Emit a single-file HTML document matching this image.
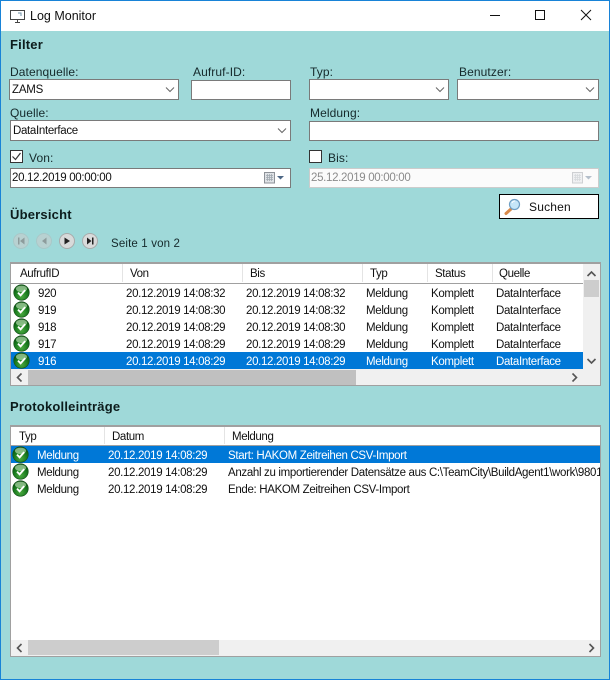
<!DOCTYPE html>
<html><head><meta charset="utf-8"><title>Log Monitor</title>
<style>
*{box-sizing:border-box}
html,body{margin:0;padding:0}
body{width:610px;height:680px;position:relative;overflow:hidden;background:#9fd9d9;font-family:"Liberation Sans",sans-serif;font-size:12px;color:#111}
.a{position:absolute}
.t{position:absolute;white-space:nowrap;line-height:14px;height:14px}
.h{font-weight:bold;font-size:13px;letter-spacing:.2px;color:#0c1c1c}
.l{font-size:12px;letter-spacing:.1px;color:#15292b}
.v{font-size:11.5px;letter-spacing:-.32px}
.f{position:absolute;background:#fff;border:1px solid #7a7a7a}
.chev{position:absolute;width:14px;height:8px}
.grid{position:absolute;background:#fff;border:1px solid #a0a0a0;border-top:2px solid #a0a0a0;overflow:hidden}
.hd{position:absolute;left:0;background:#fff;border-bottom:1px solid #a0a0a0}
.sep{position:absolute;top:0;width:1px;background:#e4e4e4}
.r{position:absolute;left:0;height:17px;font-size:11.5px;letter-spacing:-.33px;color:#111}
.r.s{background:#0078d7;color:#fff}
.r span{position:absolute;top:3px;line-height:14px;white-space:nowrap}
.r svg{position:absolute;left:2px;top:0}
.gh{position:absolute;font-size:11.5px;letter-spacing:-.38px;line-height:14px;white-space:nowrap;color:#111}
</style></head><body>
<svg width="0" height="0" style="position:absolute"><defs>
<radialGradient id="g" cx="50%" cy="75%" r="70%"><stop offset="0" stop-color="#4aa83f"/><stop offset=".6" stop-color="#187a1d"/><stop offset="1" stop-color="#0a4f0f"/></radialGradient>
<symbol id="ok" viewBox="0 0 17 17"><circle cx="8.5" cy="8.5" r="7.8" fill="url(#g)" stroke="#14501a" stroke-width=".6"/><ellipse cx="8.5" cy="4.8" rx="5.6" ry="3.2" fill="#b4dcae" opacity=".7"/><path d="M5 8.6l2.6 2.7 4.6-5.2" fill="none" stroke="#fff" stroke-width="1.9"/></symbol>
<symbol id="ch" viewBox="0 0 14 8"><path d="M3 1.5L7 5.5l4-4" fill="none" stroke="#666" stroke-width="1"/></symbol>
<symbol id="cal" viewBox="0 0 24 12"><rect x=".5" y=".5" width="10" height="10.5" fill="#dfe2e6" stroke="#8d9298"/><path d="M2 3.5h7M2 5.5h7M2 7.5h7M3.5 2v7M5.5 2v7M7.5 2v7" stroke="#a0a8b0" stroke-width=".8"/><path d="M13 4h7l-3.5 3.5z" fill="#4d6785"/></symbol>
</defs></svg>

<!-- window frame -->
<div class="a" style="left:0;top:0;width:610px;height:31px;background:#fff"></div>
<div class="a" style="left:0;top:0;width:610px;height:1px;background:#1883d7"></div>
<div class="a" style="left:0;top:0;width:1px;height:680px;background:#1883d7"></div>
<div class="a" style="right:0;top:0;width:1px;height:680px;background:#1883d7"></div>
<div class="a" style="left:0;top:679px;width:610px;height:1px;background:#1883d7"></div>

<svg class="a" style="left:10px;top:10px" width="15" height="13" viewBox="0 0 15 13"><rect x=".5" y=".5" width="14" height="9" fill="#fff" stroke="#444"/><path d="M5 12.5h5M7.5 10v2" stroke="#444"/><path d="M8 3h3v3" fill="none" stroke="#6d8fa5"/></svg>
<div class="t" style="left:30px;top:9px;font-size:12.5px;color:#111">Log Monitor</div>
<svg class="a" style="left:485px;top:5px" width="115" height="20" viewBox="0 0 115 20"><path d="M5 10.5h10" stroke="#111"/><rect x="50.5" y="5.5" width="9" height="9" fill="none" stroke="#111"/><path d="M96 5l10 10M106 5L96 15" stroke="#111" fill="none"/></svg>

<div class="t h" style="left:10px;top:38px">Filter</div>

<div class="t l" style="left:10px;top:65px">Datenquelle:</div>
<div class="f" style="left:9px;top:79px;width:170px;height:21px"></div>
<div class="t" style="left:12px;top:83px;font-size:11.5px;letter-spacing:-.2px">ZAMS</div>
<svg class="chev" style="left:163px;top:86px"><use href="#ch"/></svg>

<div class="t l" style="left:193px;top:65px">Aufruf-ID:</div>
<div class="f" style="left:191px;top:80px;width:100px;height:20px"></div>

<div class="t l" style="left:10px;top:106px">Quelle:</div>
<div class="f" style="left:10px;top:120px;width:281px;height:21px"></div>
<div class="t v" style="left:13px;top:124px">DataInterface</div>
<svg class="chev" style="left:275px;top:127px"><use href="#ch"/></svg>

<div class="a" style="left:10px;top:150px;width:13px;height:13px;background:#fff;border:1px solid #333"></div>
<svg class="a" style="left:10px;top:150px" width="13" height="13"><path d="M2.5 6.5l3 3 5-6.5" fill="none" stroke="#333" stroke-width="1.2"/></svg>
<div class="t l" style="left:29px;top:151px">Von:</div>
<div class="f" style="left:10px;top:168px;width:281px;height:20px"></div>
<div class="t v" style="left:12px;top:171px">20.12.2019 00:00:00</div>
<svg class="a" style="left:264px;top:172px" width="24" height="12"><use href="#cal"/></svg>

<div class="t l" style="left:310px;top:65px">Typ:</div>
<div class="f" style="left:309px;top:79px;width:140px;height:21px"></div>
<svg class="chev" style="left:433px;top:86px"><use href="#ch"/></svg>

<div class="t l" style="left:459px;top:65px">Benutzer:</div>
<div class="f" style="left:457px;top:79px;width:142px;height:21px"></div>
<svg class="chev" style="left:583px;top:86px"><use href="#ch"/></svg>

<div class="t l" style="left:310px;top:106px">Meldung:</div>
<div class="f" style="left:309px;top:121px;width:290px;height:20px"></div>

<div class="a" style="left:309px;top:150px;width:13px;height:13px;background:#fff;border:1px solid #333"></div>
<div class="t l" style="left:328px;top:151px">Bis:</div>
<div class="f" style="left:309px;top:168px;width:290px;height:20px;border-color:#ccc;background:#fbfbfb"></div>
<div class="t v" style="left:311px;top:171px;color:#8b8b8b">25.12.2019 00:00:00</div>
<svg class="a" style="left:572px;top:172px;opacity:.4" width="24" height="12"><use href="#cal"/></svg>

<div class="a" style="left:499px;top:194px;width:100px;height:25px;background:#fff;border:1px solid #000"></div>
<svg class="a" style="left:504px;top:198px" width="18" height="18" viewBox="0 0 18 18"><path d="M7 11l-5 4.5" stroke="#d98a4a" stroke-width="3" stroke-linecap="round"/><circle cx="10.5" cy="6.5" r="5" fill="#c6e6f8" stroke="#6f9fc4" stroke-width="1.2"/><path d="M8 5a3 3 0 0 1 3-2" stroke="#fff" fill="none"/></svg>
<div class="t" style="left:529px;top:200px;font-size:12px;letter-spacing:.2px;color:#111">Suchen</div>

<div class="t h" style="left:10px;top:208px">Übersicht</div>

<!-- pager -->
<svg class="a" style="left:12px;top:232px" width="90" height="18" viewBox="0 0 90 18">
<g opacity=".8" fill="#bfd0d0" stroke="#acc4c4"><circle cx="9" cy="9" r="7.5"/><circle cx="32" cy="9" r="7.5"/></g>
<g fill="#d8dada" stroke="#a8abab"><circle cx="55" cy="9" r="7.5"/><circle cx="78" cy="9" r="7.5"/></g>
<path d="M6 5.5h1.5v7H6zM12.5 5.5v7L8 9zM34.5 5.5v7L30 9z" fill="#8d9c9c"/>
<path d="M52.5 5.5v7L58 9zM75 5.5v7L79.5 9zM80 5.5h1.5v7H80z" fill="#222"/>
</svg>
<div class="t" style="left:111px;top:237px;font-size:11.5px;letter-spacing:.15px;color:#15292b">Seite 1 von 2</div>

<!-- grid 1 -->
<div class="grid" style="left:10px;top:262px;width:591px;height:124px">
 <div class="hd" style="top:0;width:573px;height:20px">
  <div class="sep" style="left:111px;height:18px"></div>
  <div class="sep" style="left:231px;height:18px"></div>
  <div class="sep" style="left:351px;height:18px"></div>
  <div class="sep" style="left:416px;height:18px"></div>
  <div class="sep" style="left:481px;height:18px"></div>
  <div class="gh" style="left:9px;top:3px">AufrufID</div>
  <div class="gh" style="left:119px;top:3px">Von</div>
  <div class="gh" style="left:239px;top:3px">Bis</div>
  <div class="gh" style="left:359px;top:3px">Typ</div>
  <div class="gh" style="left:424px;top:3px">Status</div>
  <div class="gh" style="left:488px;top:3px">Quelle</div>
 </div>
 <div class="r" style="top:20px;width:573px"><svg width="17" height="17"><use href="#ok"/></svg><span style="left:27px">920</span><span style="left:115px">20.12.2019 14:08:32</span><span style="left:235px">20.12.2019 14:08:32</span><span style="left:355px">Meldung</span><span style="left:420px">Komplett</span><span style="left:485px">DataInterface</span></div>
 <div class="r" style="top:37px;width:573px"><svg width="17" height="17"><use href="#ok"/></svg><span style="left:27px">919</span><span style="left:115px">20.12.2019 14:08:30</span><span style="left:235px">20.12.2019 14:08:32</span><span style="left:355px">Meldung</span><span style="left:420px">Komplett</span><span style="left:485px">DataInterface</span></div>
 <div class="r" style="top:54px;width:573px"><svg width="17" height="17"><use href="#ok"/></svg><span style="left:27px">918</span><span style="left:115px">20.12.2019 14:08:29</span><span style="left:235px">20.12.2019 14:08:30</span><span style="left:355px">Meldung</span><span style="left:420px">Komplett</span><span style="left:485px">DataInterface</span></div>
 <div class="r" style="top:71px;width:573px"><svg width="17" height="17"><use href="#ok"/></svg><span style="left:27px">917</span><span style="left:115px">20.12.2019 14:08:29</span><span style="left:235px">20.12.2019 14:08:29</span><span style="left:355px">Meldung</span><span style="left:420px">Komplett</span><span style="left:485px">DataInterface</span></div>
 <div class="r s" style="top:88px;width:573px"><svg width="17" height="17"><use href="#ok"/></svg><span style="left:27px">916</span><span style="left:115px">20.12.2019 14:08:29</span><span style="left:235px">20.12.2019 14:08:29</span><span style="left:355px">Meldung</span><span style="left:420px">Komplett</span><span style="left:485px">DataInterface</span></div>
 <!-- scrollbars -->
 <div class="a" style="left:572px;top:0;width:17px;height:105px;background:#f0f0f0"></div>
 <div class="a" style="left:573px;top:16px;width:15px;height:17px;background:#cdcdcd"></div>
 <svg class="a" style="left:572px;top:4px" width="17" height="12"><path d="M4.5 8L8.5 4l4 4" fill="none" stroke="#555" stroke-width="1.6"/></svg>
 <svg class="a" style="left:572px;top:91px" width="17" height="12"><path d="M4.5 4L8.5 8l4-4" fill="none" stroke="#555" stroke-width="1.6"/></svg>
 <div class="a" style="left:0;top:105px;width:589px;height:17px;background:#f0f0f0"></div>
 <div class="a" style="left:17px;top:106px;width:328px;height:15px;background:#c0c0c0"></div>
 <svg class="a" style="left:0;top:105px" width="17" height="17"><path d="M10.5 4.5L6.5 8.5l4 4" fill="none" stroke="#555" stroke-width="1.6"/></svg>
 <svg class="a" style="left:555px;top:105px" width="17" height="17"><path d="M6.5 4.5l4 4-4 4" fill="none" stroke="#555" stroke-width="1.6"/></svg>
</div>

<div class="t h" style="left:10px;top:400px">Protokolleinträge</div>

<!-- grid 2 -->
<div class="grid" style="left:10px;top:425px;width:591px;height:232px">
 <div class="hd" style="top:0;width:589px;height:19px">
  <div class="sep" style="left:93px;height:17px"></div>
  <div class="sep" style="left:213px;height:17px"></div>
  <div class="gh" style="left:8px;top:3px">Typ</div>
  <div class="gh" style="left:101px;top:3px">Datum</div>
  <div class="gh" style="left:221px;top:3px">Meldung</div>
 </div>
 <div class="r s" style="top:19px;width:589px"><svg width="17" height="17" style="left:.5px"><use href="#ok"/></svg><span style="left:26px">Meldung</span><span style="left:97px">20.12.2019 14:08:29</span><span style="left:217px">Start: HAKOM Zeitreihen CSV-Import</span></div>
 <div class="r" style="top:36px;width:589px;overflow:hidden"><svg width="17" height="17" style="left:.5px"><use href="#ok"/></svg><span style="left:26px">Meldung</span><span style="left:97px">20.12.2019 14:08:29</span><span style="left:217px">Anzahl zu importierender Datensätze aus C:\TeamCity\BuildAgent1\work\9801</span></div>
 <div class="r" style="top:53px;width:589px"><svg width="17" height="17" style="left:.5px"><use href="#ok"/></svg><span style="left:26px">Meldung</span><span style="left:97px">20.12.2019 14:08:29</span><span style="left:217px">Ende: HAKOM Zeitreihen CSV-Import</span></div>
 <div class="a" style="left:0;top:213px;width:589px;height:16px;background:#f0f0f0"></div>
 <div class="a" style="left:17px;top:213px;width:191px;height:15px;background:#cdcdcd"></div>
 <svg class="a" style="left:0;top:213px" width="17" height="16"><path d="M10.5 4L6.5 8l4 4" fill="none" stroke="#555" stroke-width="1.6"/></svg>
 <svg class="a" style="left:572px;top:213px" width="17" height="16"><path d="M6.5 4l4 4-4 4" fill="none" stroke="#555" stroke-width="1.6"/></svg>
</div>
</body></html>
